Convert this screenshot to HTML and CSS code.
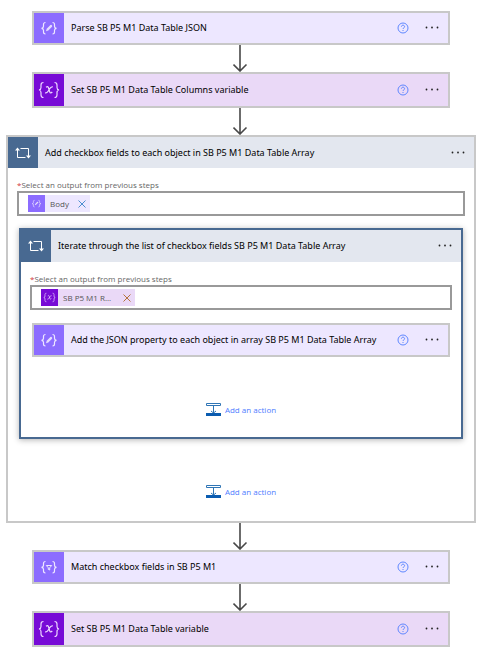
FILE: index.html
```html
<!DOCTYPE html>
<html lang="en">
<head>
<meta charset="utf-8">
<meta name="viewport" content="width=device-width, initial-scale=1">
<title>Flow designer</title>
<link rel="stylesheet" href="styles.css">
</head>
<body>
<svg class="defs" aria-hidden="true">
  <defs>
    <symbol id="braces" viewBox="0 0 30 30">
      <path d="M11.500 9.500c-1.600 0-2 .6-2 1.900v1.800c0 1.200-.5 2-2 2.100c1.500.1 2 .8 2 2v1.800c0 1.300.4 1.900 2 1.900M18.500 9.500c1.600 0 2 .6 2 1.900v1.800c0 1.200.5 2 2 2.100c-1.500.1-2 .8-2 2v1.800c0 1.300-.4 1.900-2 1.900" fill="none" stroke="currentColor" stroke-width="1.200"/>
    </symbol>
    <symbol id="compose" viewBox="0 0 30 30">
      <use href="#braces"/>
      <path d="M12 18.200l.7-2.400 3.700-3.700q.8-.6 1.500.1t.1 1.500l-3.700 3.700z" fill="currentColor" opacity=".9"/>
    </symbol>
    <symbol id="filter" viewBox="0 0 30 30">
      <use href="#braces"/>
      <path d="M12.300 13.500h5.400l-2 2.300v2.200l-1.400-.6v-1.600z" fill="none" stroke="currentColor"/>
    </symbol>
    <symbol id="variable" viewBox="0 0 30 30">
      <path d="M9.500 7.500c-2 0-2.500.8-2.500 2.500v2.500c0 1.500-.5 2.300-2 2.500c1.500.2 2 1 2 2.500v2.500c0 1.700.5 2.500 2.500 2.500M20.500 7.500c2 0 2.500.8 2.500 2.500v2.500c0 1.500.5 2.300 2 2.500c-1.500.2-2 1-2 2.500v2.500c0 1.700-.5 2.500-2.500 2.500" fill="none" stroke="currentColor" stroke-width="1.200"/>
      <path d="M12 12.200c1.300-1 2-.9 2.500.6l1.200 4c.4 1.500 1.400 1.500 2.600.2M18.800 11.900c-1.200-.4-2.200.2-3.400 2.200l-1.300 2.100c-1 1.600-1.900 2-3 1.600" fill="none" stroke="currentColor" stroke-width="1.200"/>
    </symbol>
    <symbol id="loop" viewBox="0 0 30 30">
      <path d="M9.500 11.500v8h8M12.500 10.500h8v8" fill="none" stroke="currentColor"/>
      <path d="M7 12.500L9.500 9.500l2.500 3zM18 17.500h5l-2.500 3z" fill="currentColor"/>
    </symbol>
    <symbol id="help" viewBox="0 0 12 12">
      <circle cx="6" cy="6" r="5" fill="none" stroke="currentColor" stroke-width=".9"/>
      <path d="M4.400 4.700c0-2 3.200-2 3.200 0c0 1.200-1.600 1.100-1.600 2.300M6 8v1" fill="none" stroke="currentColor" stroke-width=".9"/>
    </symbol>
    <symbol id="dots" viewBox="0 0 14 4">
      <circle cx="1.500" cy="1.500" r=".9" fill="currentColor"/>
      <circle cx="7" cy="1.500" r=".9" fill="currentColor"/>
      <circle cx="12.500" cy="1.500" r=".9" fill="currentColor"/>
    </symbol>
    <symbol id="close" viewBox="0 0 8 8">
      <path d="M.5.5l7 7M7.500.5l-7 7" fill="none" stroke="currentColor"/>
    </symbol>
    <symbol id="arrow" viewBox="0 0 16 27">
      <path d="M7 0v26M.5 19.500L7 26l6.500-6.500" fill="none" stroke="currentColor" stroke-width="1.600"/>
    </symbol>
    <symbol id="insert" viewBox="0 0 15 13">
      <path d="M.5.5h14v2H.5zM7.500 3v7M5 8l2.500 2L10 8" fill="none" stroke="#2f75b5"/>
      <path d="M0 10h15v3H0z" fill="#0b5cb0"/>
    </symbol>
  </defs>
</svg>

<main class="flow">
  <section class="card card-data">
    <span class="tile"><svg><use href="#compose"/></svg></span>
    <h2 class="title">Parse SB P5 M1 Data Table JSON</h2>
    <button class="help" aria-label="Help"><svg><use href="#help"/></svg></button>
    <button class="more" aria-label="More commands"><svg><use href="#dots"/></svg></button>
  </section>
  <svg class="arrow"><use href="#arrow"/></svg>
  <section class="card card-variable">
    <span class="tile"><svg><use href="#variable"/></svg></span>
    <h2 class="title">Set SB P5 M1 Data Table Columns variable</h2>
    <button class="help" aria-label="Help"><svg><use href="#help"/></svg></button>
    <button class="more" aria-label="More commands"><svg><use href="#dots"/></svg></button>
  </section>
  <svg class="arrow"><use href="#arrow"/></svg>

  <section class="loop">
    <header class="loop-head">
      <span class="tile"><svg><use href="#loop"/></svg></span>
      <h2 class="title">Add checkbox fields to each object in SB P5 M1 Data Table Array</h2>
      <button class="more" aria-label="More commands"><svg><use href="#dots"/></svg></button>
    </header>
    <div class="field">
      <label for="outer-output"><span class="required">*</span>Select an output from previous steps</label>
      <div class="token-box">
        <span class="token token-data">
          <span class="token-tile"><svg><use href="#compose"/></svg></span>
          <span class="token-name">Body</span>
          <button class="remove" aria-label="Remove Body"><svg><use href="#close"/></svg></button>
        </span>
        <input id="outer-output" type="text">
      </div>
    </div>

    <section class="loop loop-selected">
      <header class="loop-head">
        <span class="tile"><svg><use href="#loop"/></svg></span>
        <h2 class="title">Iterate through the list of checkbox fields SB P5 M1 Data Table Array</h2>
        <button class="more" aria-label="More commands"><svg><use href="#dots"/></svg></button>
      </header>
      <div class="field">
        <label for="inner-output"><span class="required">*</span>Select an output from previous steps</label>
        <div class="token-box">
          <span class="token token-variable">
            <span class="token-tile"><svg><use href="#variable"/></svg></span>
            <span class="token-name">SB P5 M1 R...</span>
            <button class="remove" aria-label="Remove variable"><svg><use href="#close"/></svg></button>
          </span>
          <input id="inner-output" type="text">
        </div>
      </div>
      <section class="card card-data">
        <span class="tile"><svg><use href="#compose"/></svg></span>
        <h2 class="title">Add the JSON property to each object in array SB P5 M1 Data Table Array</h2>
        <button class="help" aria-label="Help"><svg><use href="#help"/></svg></button>
        <button class="more" aria-label="More commands"><svg><use href="#dots"/></svg></button>
      </section>
      <button class="add"><svg><use href="#insert"/></svg>Add an action</button>
    </section>

    <button class="add"><svg><use href="#insert"/></svg>Add an action</button>
  </section>

  <svg class="arrow"><use href="#arrow"/></svg>
  <section class="card card-data">
    <span class="tile"><svg><use href="#filter"/></svg></span>
    <h2 class="title">Match checkbox fields in SB P5 M1</h2>
    <button class="help" aria-label="Help"><svg><use href="#help"/></svg></button>
    <button class="more" aria-label="More commands"><svg><use href="#dots"/></svg></button>
  </section>
  <svg class="arrow"><use href="#arrow"/></svg>
  <section class="card card-variable">
    <span class="tile"><svg><use href="#variable"/></svg></span>
    <h2 class="title">Set SB P5 M1 Data Table variable</h2>
    <button class="help" aria-label="Help"><svg><use href="#help"/></svg></button>
    <button class="more" aria-label="More commands"><svg><use href="#dots"/></svg></button>
  </section>
</main>
</body>
</html>
```
FILE: styles.css
```css
* {
  box-sizing: border-box;
}

body {
  margin: 0;
  background: #fff;
  color: #000;
  font: 8px/12px "Open Sans", "Noto Sans", sans-serif;
}

svg {
  display: block;
}

.defs {
  position: absolute;
  width: 0;
  height: 0;
}

button {
  margin: 0;
  padding: 0;
  border: 0;
  background: none;
  color: inherit;
  font: inherit;
  cursor: pointer;
}

.flow {
  display: flex;
  flex-direction: column;
  padding: 11px 5px 12px 6px;
}

.flow > .card {
  margin: 0 26px;
}

.flow > .loop {
  padding-bottom: 2px;
}

.arrow {
  align-self: center;
  width: 16px;
  height: 27px;
  color: #484848;
}

.card {
  display: flex;
  align-items: center;
  min-height: 34px;
  padding-right: 9px;
  border: 2px solid #c8c8c8;
}

.card-data {
  background: #ede7ff;
}

.card-variable {
  min-height: 36px;
  background: #ead9f7;
}

.tile {
  display: flex;
  flex: none;
  align-items: center;
  align-self: stretch;
  width: 30px;
  color: #fff;
}

.tile svg {
  width: 30px;
  height: 30px;
}

.card-data .tile,
.token-data .token-tile {
  background: #8c6cff;
  color: #eee8ff;
}

.card-variable .tile,
.token-variable .token-tile {
  background: #770bd6;
  color: #ecd6ff;
}

.title {
  flex: 1;
  margin: 0;
  padding-left: 7px;
  font: 400 9px/12px "Noto Sans", "Open Sans", sans-serif;
  white-space: nowrap;
}

.help {
  margin-right: 16px;
  color: #4f7dff;
}

.help svg {
  width: 12px;
  height: 12px;
}

.more svg {
  width: 14px;
  height: 4px;
  color: #222;
}

.loop {
  display: flex;
  flex-direction: column;
  border: 2px solid #c8c8c8;
  background: #fff;
}

.loop-head {
  display: flex;
  align-items: center;
  min-height: 31px;
  padding-right: 9px;
  background: #e3e7ef;
}

.loop-head .tile {
  background: #486991;
}

.field {
  margin: 11px 9px 0;
}

.field label {
  display: block;
  color: #666;
}

.required {
  color: #d13438;
}

.token-box {
  display: flex;
  align-items: center;
  height: 25px;
  padding-left: 9px;
  border: 2px solid #999;
}

.token-box input {
  flex: 1;
  min-width: 0;
  height: 17px;
  padding: 0;
  border: 0;
  outline: 0;
  background: none;
  font: inherit;
}

.token {
  display: flex;
  align-items: center;
  height: 17px;
  padding-right: 4px;
  color: #555;
}

.token-data {
  background: #ede7ff;
}

.token-variable {
  background: #ead9f7;
}

.token-tile svg {
  width: 17px;
  height: 17px;
}

.token-name {
  padding: 0 9px 0 5px;
}

.token-variable .token-name {
  padding-right: 12px;
}

.remove svg {
  width: 8px;
  height: 8px;
}

.token-data .remove {
  color: #4c8fd0;
}

.token-variable .remove {
  color: #b5743c;
}

.loop-selected {
  margin: 12px 11px 0 11px;
  border-color: #486991;
  box-shadow: 0 1px 6px rgba(0, 0, 0, 0.3);
}

.loop-selected .loop-head {
  min-height: 32px;
}

.loop-selected > .card {
  margin: 13px 11px 0;
}

.add {
  display: flex;
  align-items: center;
  align-self: center;
  gap: 4px;
  margin: 46px 0 21px;
  color: #4f7dff;
}

.add svg {
  width: 15px;
  height: 13px;
}
```
